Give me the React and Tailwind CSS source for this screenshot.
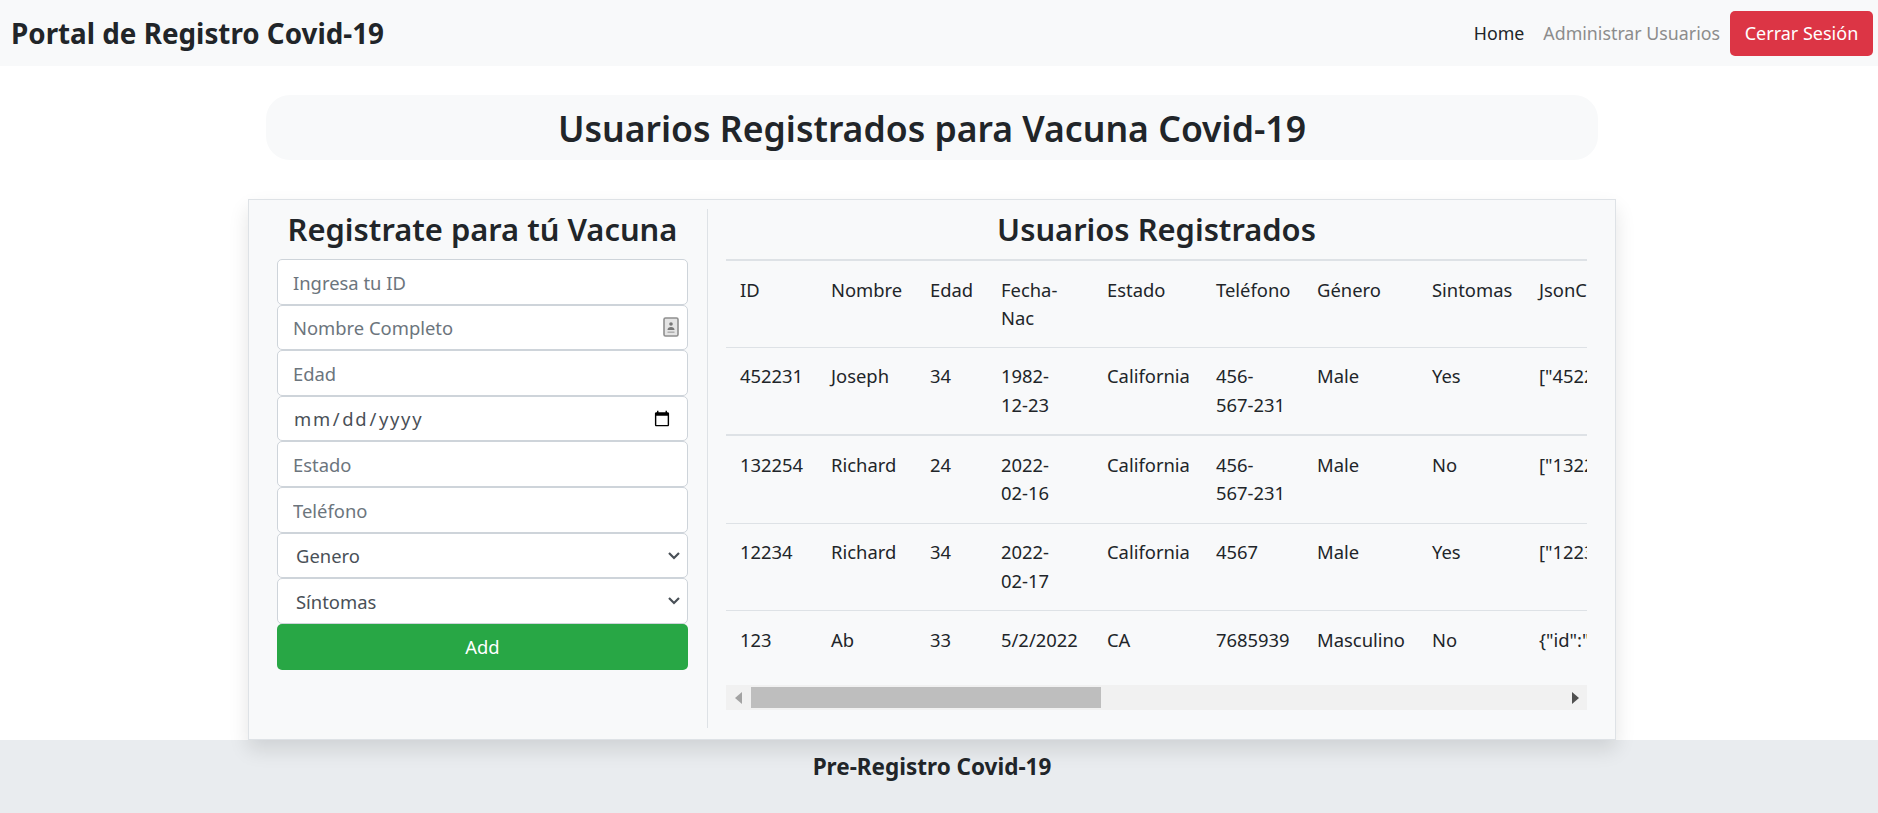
import React from 'react';

const columns = [
    { label: 'ID', width: 'w-[91px]' },
    { label: 'Nombre', width: 'w-[99px]' },
    { label: 'Edad', width: 'w-[71px]' },
    { label: 'Fecha-Nac', width: 'w-[106px]' },
    { label: 'Estado', width: 'w-[109px]' },
    { label: 'Teléfono', width: 'w-[101px]' },
    { label: 'Género', width: 'w-[115px]' },
    { label: 'Sintomas', width: 'w-[107px]' },
    { label: 'JsonCode', width: 'w-[1196px]' },
];

const users = [
    ['452231', 'Joseph', '34', '1982-12-23', 'California', '456-567-231', 'Male', 'Yes', '["452231","Joseph","34"]'],
    ['132254', 'Richard', '24', '2022-02-16', 'California', '456-567-231', 'Male', 'No', '["132254","Richard","24"]'],
    ['12234', 'Richard', '34', '2022-02-17', 'California', '4567', 'Male', 'Yes', '["12234","Richard","34"]'],
    ['123', 'Ab', '33', '5/2/2022', 'CA', '7685939', 'Masculino', 'No', '{"id":"123","nombre":"Ab"}'],
];

const inputClass = 'block w-full h-[45.6px] bg-white border border-[#ced4da] rounded-[5px] pl-[15px] pr-[14px] pt-[1px] text-[18.4px] text-[#495057] placeholder:text-[#6c757d] outline-none';

function ContactIcon() {
    return (
        <svg className="absolute right-[9px] top-[12px]" width="16" height="20" viewBox="0 0 16 20">
            <rect x="1" y="1" width="14" height="18" rx="1.5" fill="#e4e4e4" stroke="#8f8f8f" strokeWidth="1.6" />
            <circle cx="8" cy="7" r="1.8" fill="#777" />
            <path d="M4.5 13c0-2 1.5-3 3.5-3s3.5 1 3.5 3z" fill="#777" />
            <rect x="4.5" y="14.5" width="7" height="1.4" fill="#aaa" />
        </svg>
    );
}

function SelectField({ label }) {
    return (
        <div className="relative">
            <select className="block w-full h-[45.6px] appearance-none bg-white border border-[#ced4da] rounded-[5px] pl-[18px] pt-[2px] text-[18.4px] text-[#495057] outline-none">
                <option>{label}</option>
            </select>
            <svg className="absolute right-[7px] top-[18px] pointer-events-none" width="14" height="10" viewBox="0 0 14 10" fill="none">
                <path d="M2 2l5 5 5-5" stroke="#495057" strokeWidth="2.2" />
            </svg>
        </div>
    );
}

export default function App() {
    return (
        <div className="min-h-[813px] bg-white text-[#212529] font-['Noto_Sans','Open_Sans',sans-serif] text-[18.4px] leading-[28.8px]">
            <nav className="h-[66px] bg-[#f8f9fa] flex items-center justify-between pl-[11px] pr-[5px]">
                <div className="text-[27.8px] font-bold">Portal de Registro Covid-19</div>
                <div className="flex items-center text-[17.8px]">
                    <a className="mr-[19px] text-[#212529]">Home</a>
                    <a className="mr-[10px] text-[#8c8c8c]">Administrar Usuarios</a>
                    <button className="h-[45px] w-[143px] bg-[#dc3545] text-white rounded-[5px] text-[18px]">Cerrar Sesión</button>
                </div>
            </nav>

            <main className="w-[1864px] flex flex-col items-center pt-[29px]">
                <div className="w-[1332px] h-[65px] bg-[#f8f9fa] rounded-[24px] flex items-center justify-center">
                    <h2 className="text-[35.6px] font-semibold leading-[44px]">Usuarios Registrados para Vacuna Covid-19</h2>
                </div>

                <div className="mt-[39px] w-[1368px] h-[541px] bg-[#f8f9fa] border border-[#dee2e6] shadow-[0_10px_19px_rgba(0,0,0,0.11)] flex pt-[9px] pb-[11px]">
                    <section className="w-[459px] pl-[28px] pr-[19px] border-r border-[#dee2e6]">
                        <h3 className="text-[30.9px] font-semibold text-center leading-[41px] mb-[9px]">Registrate para tú Vacuna</h3>
                        <form className="w-[411px]">
                            <input className={inputClass} placeholder="Ingresa tu ID" />
                            <div className="relative">
                                <input className={inputClass} placeholder="Nombre Completo" />
                                <ContactIcon />
                            </div>
                            <input className={inputClass} placeholder="Edad" />
                            <input className={`${inputClass} tracking-[1.7px]`} type="date" />
                            <input className={inputClass} placeholder="Estado" />
                            <input className={inputClass} placeholder="Teléfono" />
                            <SelectField label="Genero" />
                            <SelectField label="Síntomas" />
                            <button type="button" className="block w-full h-[46px] pt-[1px] bg-[#28a745] text-white rounded-[5px]">Add</button>
                        </form>
                    </section>

                    <section className="w-[861px] ml-[18px]">
                        <h3 className="text-[30.9px] font-semibold text-center leading-[41px] h-[41px]">Usuarios Registrados</h3>
                        <div className="overflow-hidden mt-[9px]">
                            <table className="table-fixed w-[1995px] border-collapse text-left">
                                <thead>
                                    <tr className="border-t-2 border-[#dee2e6] align-top">
                                        {columns.map((col) => (
                                            <th key={col.label} className={`${col.width} pl-[14px] pr-[24px] pt-[14.5px] pb-[13.5px] font-normal`}>{col.label}</th>
                                        ))}
                                    </tr>
                                </thead>
                                <tbody>
                                    {users.map((row, i) => (
                                        <tr key={row[0]} className={`align-top border-[#dee2e6] ${i === 1 ? 'border-t-2' : 'border-t'}`}>
                                            {row.map((cell, j) => (
                                                <td key={j} className={`pl-[14px] py-[14.5px] ${j === 5 ? 'pr-[17px]' : 'pr-[24px]'} ${j === 8 ? 'whitespace-nowrap' : ''}`}>{cell}</td>
                                            ))}
                                        </tr>
                                    ))}
                                </tbody>
                            </table>
                        </div>
                        <div className="h-[25px] bg-[#f1f1f1] flex items-center justify-between mt-[16px]">
                            <div className="w-[25px] flex justify-center">
                                <svg width="8" height="12" viewBox="0 0 8 12"><path d="M7 0v12L0 6z" fill="#a3a3a3" /></svg>
                            </div>
                            <div className="w-[350px] h-[21px] bg-[#bebebe] mr-auto"></div>
                            <div className="w-[25px] flex justify-center">
                                <svg width="8" height="12" viewBox="0 0 8 12"><path d="M1 0v12l7-6z" fill="#505050" /></svg>
                            </div>
                        </div>
                    </section>
                </div>
            </main>

            <footer className="h-[73px] bg-[#e9ecef] pr-[14px] pt-[13px] text-center text-[22.5px] font-bold">
                Pre-Registro Covid-19
            </footer>
        </div>
    );
}
